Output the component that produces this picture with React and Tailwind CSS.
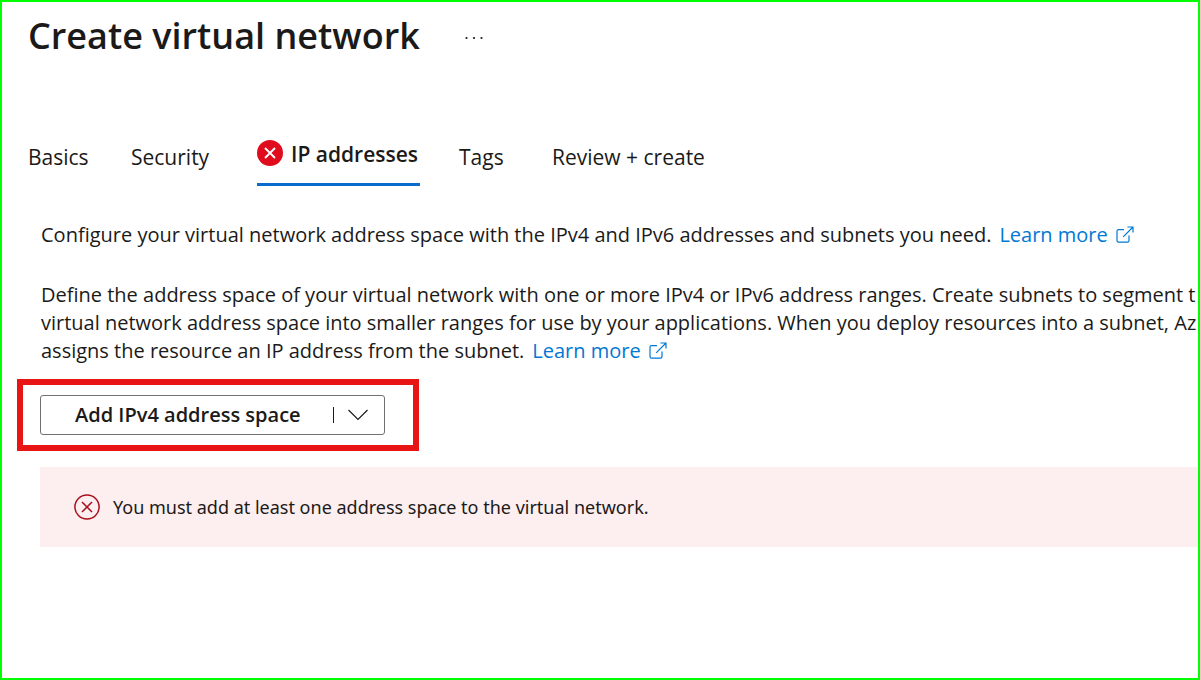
import React from "react";

function ExternalIcon() {
  return (
    <svg viewBox="0 0 18 18" className="ml-2 inline-block size-[18px] align-[-2px]" fill="none" stroke="currentColor" strokeWidth="1.2" aria-hidden="true">
      <path d="M8 3.6H2.6Q1 3.6 1 5.2V14.6Q1 16.2 2.6 16.2H11.4Q13 16.2 13 14.6V9.4" />
      <path d="M7.2 10.8 17 1M11.4 1H17V6.6" />
    </svg>
  );
}

function LearnMore() {
  return (
    <a href="#learn-more" className="ml-2 text-[#0078d4]">
      Learn more
      <ExternalIcon />
    </a>
  );
}

const tab = "flex h-10 items-center text-[21px] leading-7";

export default function App() {
  return (
    <div className="min-h-screen overflow-hidden border-2 border-[#00ff00] bg-white font-['Open_Sans','Noto_Sans',sans-serif] text-[#1b1a19]">
      <header className="flex h-[68px] items-center gap-11 pl-[26px]">
        <h1 className="text-[36px] leading-[68px] font-semibold whitespace-nowrap">Create virtual network</h1>
        <button type="button" aria-label="More actions" className="flex items-center pt-1">
          <svg viewBox="0 0 20 4" className="h-1 w-5" fill="currentColor" aria-hidden="true">
            <circle cx="2.5" cy="2" r="1.1" />
            <circle cx="10" cy="2" r="1.1" />
            <circle cx="17.5" cy="2" r="1.1" />
          </svg>
        </button>
      </header>

      <nav role="tablist" className="mt-16 flex h-[52px] items-start pl-[26px] whitespace-nowrap">
        <button type="button" role="tab" aria-selected="false" className={`${tab} mt-[3px] w-[103px]`}>Basics</button>
        <button type="button" role="tab" aria-selected="false" className={`${tab} mt-[3px] w-[126px]`}>Security</button>
        <button type="button" role="tab" aria-selected="true" className="flex h-[52px] w-[163px] items-start border-b-3 border-[#0a6cce] text-[21px] leading-10 font-semibold">
          <svg viewBox="0 0 26 26" className="mt-[6px] mr-2 size-[26px] shrink-0" aria-hidden="true">
            <circle cx="13" cy="13" r="13" fill="#e00b1c" />
            <path d="m8 8 10 10M18 8 8 18" stroke="#fff" strokeWidth="1.9" />
          </svg>
          IP addresses
        </button>
        <button type="button" role="tab" aria-selected="false" className={`${tab} mt-[3px] ml-[39px] w-[93px]`}>Tags</button>
        <button type="button" role="tab" aria-selected="false" className={`${tab} mt-[3px]`}>Review + create</button>
      </nav>

      <main className="text-[20px] leading-7 whitespace-nowrap">
        <p className="mt-[35px] ml-[39px]">
          Configure your virtual network address space with the IPv4 and IPv6 addresses and subnets you need.
          <LearnMore />
        </p>
        <p className="mt-8 ml-[39px]">
          Define the address space of your virtual network with one or more IPv4 or IPv6 address ranges. Create subnets to segment t
          <br />
          virtual network address space into smaller ranges for use by your applications. When you deploy resources into a subnet, Az
          <br />
          assigns the resource an IP address from the subnet.
          <LearnMore />
        </p>

        <div className="mt-[14px] ml-[15px] flex h-[72px] w-[402px] items-center border-6 border-[#e91515] pl-[17px]">
          <button type="button" className="flex h-10 w-[345px] items-center rounded-[3px] border border-[#707070] pl-[34px] font-semibold">
            <span className="w-[258px] text-left">Add IPv4 address space</span>
            <span className="h-4 w-px bg-[#1b1a19]" />
            <svg viewBox="0 0 20 12" className="ml-[14px] h-3 w-5" fill="none" stroke="currentColor" strokeWidth="1.2" aria-hidden="true">
              <path d="m.5 1 9.5 9.5L19.5 1" />
            </svg>
          </button>
        </div>

        <div role="alert" className="mt-4 ml-[38px] flex h-20 items-center bg-[#fdeeef] pl-[34px] font-['Noto_Sans','Open_Sans',sans-serif] text-[18px]">
          <svg viewBox="0 0 26 26" className="mr-[13px] size-[26px] shrink-0" fill="none" stroke="#a80f1c" strokeWidth="1.5" aria-hidden="true">
            <circle cx="13" cy="13" r="12.1" />
            <path d="m8 8 10 10M18 8 8 18" />
          </svg>
          You must add at least one address space to the virtual network.
        </div>
      </main>
    </div>
  );
}
